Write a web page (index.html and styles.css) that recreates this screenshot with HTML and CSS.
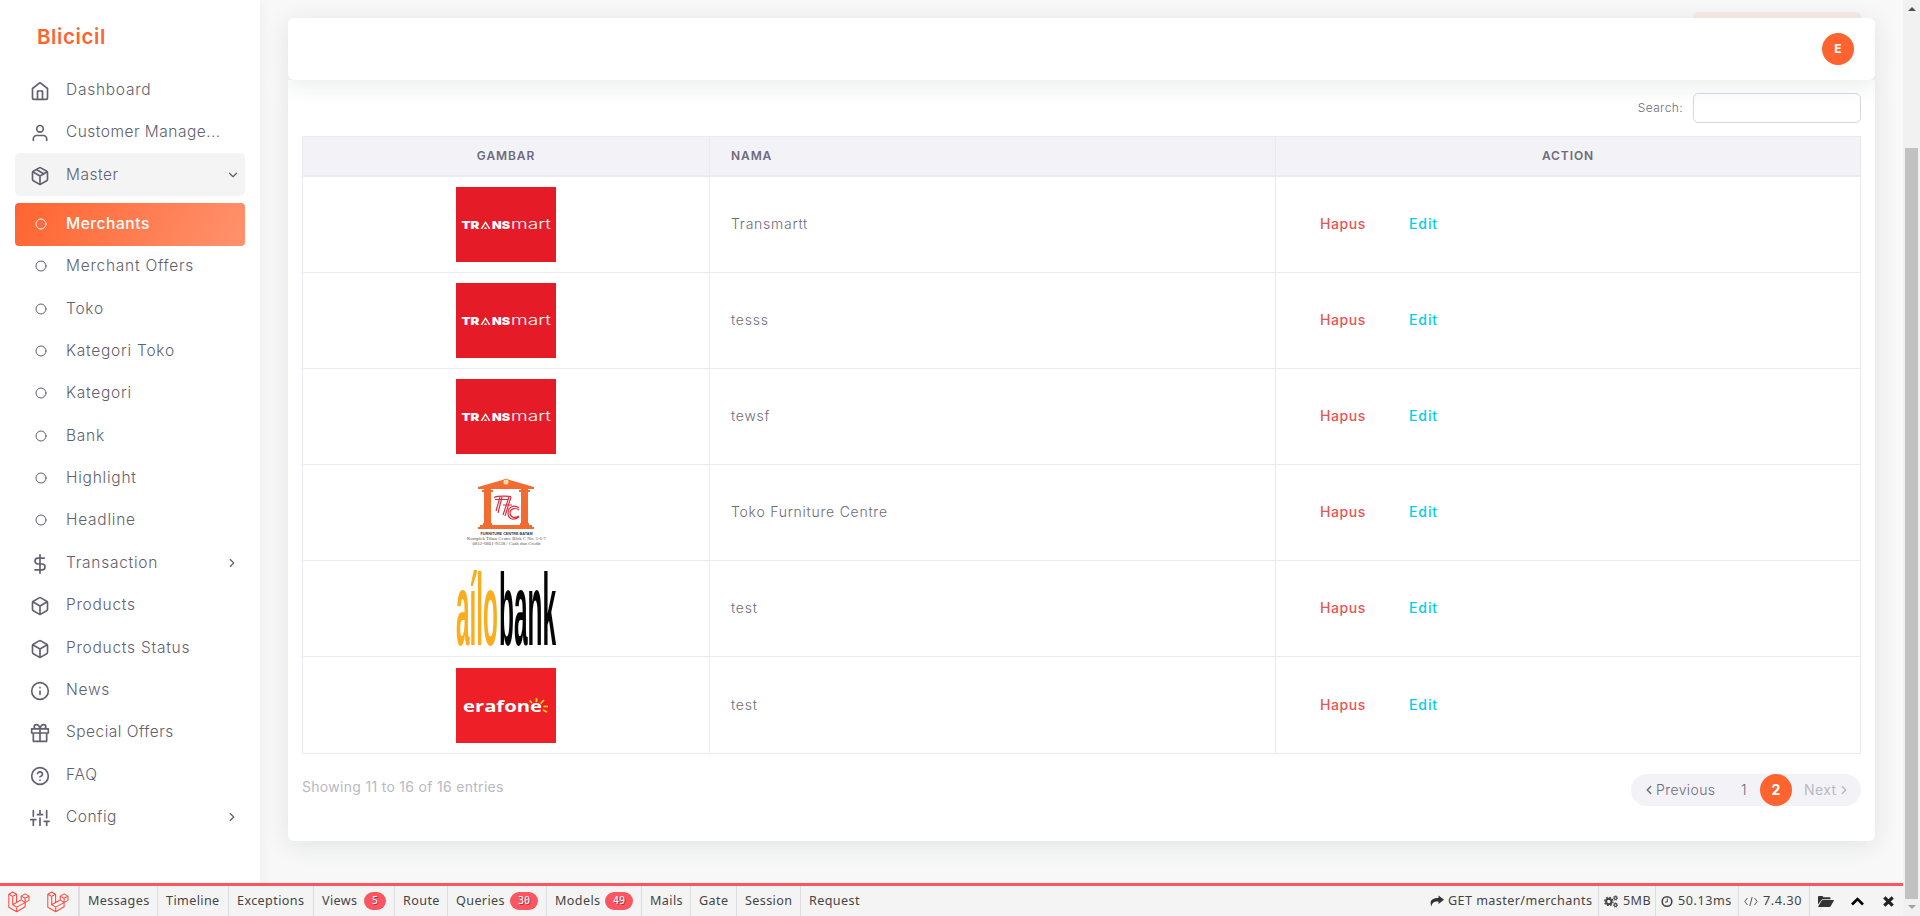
FILE: index.html
```html
<!DOCTYPE html>
<html lang="id">
<head>
<meta charset="utf-8">
<title>Blicicil</title>
<link rel="stylesheet" href="styles.css">
</head>
<body>
<svg class="defs">
  <symbol id="home" viewBox="0 0 24 24"><path d="M3 9l9-7 9 7v11a2 2 0 0 1-2 2H5a2 2 0 0 1-2-2z"/><path d="M9 22V12h6v10"/></symbol>
  <symbol id="user" viewBox="0 0 24 24"><path d="M20 21v-2a4 4 0 0 0-4-4H8a4 4 0 0 0-4 4v2"/><circle cx="12" cy="7" r="4"/></symbol>
  <symbol id="package" viewBox="0 0 24 24"><path d="M16.5 9.4l-9-5.19M21 16V8a2 2 0 0 0-1-1.73l-7-4a2 2 0 0 0-2 0l-7 4A2 2 0 0 0 3 8v8a2 2 0 0 0 1 1.73l7 4a2 2 0 0 0 2 0l7-4A2 2 0 0 0 21 16z"/><path d="M3.27 6.96L12 12.01l8.73-5.05M12 22.08V12"/></symbol>
  <symbol id="box" viewBox="0 0 24 24"><path d="M21 16V8a2 2 0 0 0-1-1.73l-7-4a2 2 0 0 0-2 0l-7 4A2 2 0 0 0 3 8v8a2 2 0 0 0 1 1.73l7 4a2 2 0 0 0 2 0l7-4A2 2 0 0 0 21 16z"/><path d="M3.27 6.96L12 12.01l8.73-5.05M12 22.08V12"/></symbol>
  <symbol id="circle" viewBox="0 0 24 24"><circle cx="12" cy="12" r="10"/></symbol>
  <symbol id="dollar" viewBox="0 0 24 24"><path d="M12 1v22M17 5H9.5a3.5 3.5 0 0 0 0 7h5a3.5 3.5 0 0 1 0 7H6"/></symbol>
  <symbol id="info" viewBox="0 0 24 24"><circle cx="12" cy="12" r="10"/><path d="M12 16v-4M12 8h.01"/></symbol>
  <symbol id="gift" viewBox="0 0 24 24"><path d="M20 12v10H4V12M2 7h20v5H2zM12 22V7M12 7H7.5a2.5 2.5 0 0 1 0-5C11 2 12 7 12 7zM12 7h4.500a2.500 2.500 0 0 0 0-5C13 2 12 7 12 7z"/></symbol>
  <symbol id="help" viewBox="0 0 24 24"><circle cx="12" cy="12" r="10"/><path d="M9.090 9a3 3 0 0 1 5.830 1c0 2-3 3-3 3M12 17h.01"/></symbol>
  <symbol id="sliders" viewBox="0 0 24 24"><path d="M4 21v-7M4 10V3M12 21v-9M12 8V3M20 21v-5M20 12V3M1 14h6M9 8h6M17 16h6"/></symbol>
  <symbol id="right" viewBox="0 0 24 24"><path d="M9 18l6-6-6-6"/></symbol>
  <symbol id="left" viewBox="0 0 24 24"><path d="M15 18l-6-6 6-6"/></symbol>
  <symbol id="down" viewBox="0 0 24 24"><path d="M6 9l6 6 6-6"/></symbol>
  <symbol id="laravel" viewBox="0 0 22 22"><path d="M.8 3.200L4.700 1l3.900 2.200v8.300l4.600-2.600V5.100L17.100 2.900 21 5.100v4.300l-3.900 2.200v4.200L8.700 20.700.8 16.200zM.8 3.200l3.900 2.200 3.900-2.200M4.700 5.400v8.400l3.900-2.300M4.700 13.800l4 2.300 8.400-4.500M8.700 16.100v4.600M13.200 5.100l3.900 2.200L21 5.100M17.100 7.300v4.300l-3.900-2.700"/></symbol>
</svg>
<div class="app">
  <aside class="sidebar">
    <div class="brand">Blicicil</div>
    <nav>
      <a class="item"><svg><use href="#home"/></svg><span>Dashboard</span></a>
      <a class="item"><svg><use href="#user"/></svg><span class="customer">Customer Manage...</span></a>
      <a class="item open"><svg><use href="#package"/></svg><span class="master">Master</span><svg class="chev"><use href="#down"/></svg></a>
      <a class="item sub active"><svg><use href="#circle"/></svg><span>Merchants</span></a>
      <a class="item sub"><svg><use href="#circle"/></svg><span>Merchant Offers</span></a>
      <a class="item sub"><svg><use href="#circle"/></svg><span>Toko</span></a>
      <a class="item sub"><svg><use href="#circle"/></svg><span>Kategori Toko</span></a>
      <a class="item sub"><svg><use href="#circle"/></svg><span>Kategori</span></a>
      <a class="item sub"><svg><use href="#circle"/></svg><span>Bank</span></a>
      <a class="item sub"><svg><use href="#circle"/></svg><span>Highlight</span></a>
      <a class="item sub"><svg><use href="#circle"/></svg><span>Headline</span></a>
      <a class="item"><svg><use href="#dollar"/></svg><span>Transaction</span><svg class="chev"><use href="#right"/></svg></a>
      <a class="item"><svg><use href="#box"/></svg><span>Products</span></a>
      <a class="item"><svg><use href="#box"/></svg><span>Products Status</span></a>
      <a class="item"><svg><use href="#info"/></svg><span>News</span></a>
      <a class="item"><svg><use href="#gift"/></svg><span class="customer">Special Offers</span></a>
      <a class="item"><svg><use href="#help"/></svg><span>FAQ</span></a>
      <a class="item"><svg><use href="#sliders"/></svg><span class="master">Config</span><svg class="chev"><use href="#right"/></svg></a>
    </nav>
  </aside>
  <main class="content">
    <div class="add-button"></div>
    <header class="navbar"><div class="avatar">E</div></header>
    <section class="card">
      <label class="search"><span>Search:</span><input type="text"></label>
      <table>
        <thead><tr><th class="c1">Gambar</th><th class="c2">Nama</th><th class="c3">Action</th></tr></thead>
        <tbody>
          <tr><td class="pic"><svg class="tm" viewBox="0 0 100 75"><text class="tm-bold" x="5.500" y="42" textLength="18" lengthAdjust="spacingAndGlyphs">TR</text><path d="M24.500 42l5-8 5 8h-1.700l-3.300-5.500-3.300 5.500zM28 42l1.500-2.500L31 42z"/><text class="tm-bold" x="36" y="42" textLength="18" lengthAdjust="spacingAndGlyphs">NS</text><text class="tm-thin" x="55" y="42" textLength="40" lengthAdjust="spacingAndGlyphs">mart</text></svg></td><td class="name">Transmartt</td><td><div class="actions"><a class="del">Hapus</a><a class="edit">Edit</a></div></td></tr>
          <tr><td class="pic"><svg class="tm" viewBox="0 0 100 75"><text class="tm-bold" x="5.500" y="42" textLength="18" lengthAdjust="spacingAndGlyphs">TR</text><path d="M24.500 42l5-8 5 8h-1.700l-3.300-5.500-3.300 5.500zM28 42l1.500-2.500L31 42z"/><text class="tm-bold" x="36" y="42" textLength="18" lengthAdjust="spacingAndGlyphs">NS</text><text class="tm-thin" x="55" y="42" textLength="40" lengthAdjust="spacingAndGlyphs">mart</text></svg></td><td class="name">tesss</td><td><div class="actions"><a class="del">Hapus</a><a class="edit">Edit</a></div></td></tr>
          <tr><td class="pic"><svg class="tm" viewBox="0 0 100 75"><text class="tm-bold" x="5.500" y="42" textLength="18" lengthAdjust="spacingAndGlyphs">TR</text><path d="M24.500 42l5-8 5 8h-1.700l-3.300-5.500-3.300 5.500zM28 42l1.500-2.500L31 42z"/><text class="tm-bold" x="36" y="42" textLength="18" lengthAdjust="spacingAndGlyphs">NS</text><text class="tm-thin" x="55" y="42" textLength="40" lengthAdjust="spacingAndGlyphs">mart</text></svg></td><td class="name">tewsf</td><td><div class="actions"><a class="del">Hapus</a><a class="edit">Edit</a></div></td></tr>
          <tr><td class="pic"><svg viewBox="0 0 100 75">
            <g fill="#f26b31"><path d="M22 12L50 4l28 8v2H22zM28 14h7v35h-7zM65 14h7v35h-7zM26 15h11v2H26zM63 15h11v2H63zM27 48h9v3h-9zM64 48h9v3h-9zM24 50h52v2H24zM22 52h56v2H22z"/><circle cx="50" cy="7" r="3" fill="#fbd9a5" stroke="#f26b31" stroke-width=".7"/></g>
            <g fill="none" stroke="#dc2f3d" stroke-width="1.200"><path d="M38 22.500q4-2 17-1M39 24.500h13M47 30h9M44 22l-4 14M46 22l-4 16M53 22l-6 18M55 22l-6 19"/><path d="M63 33c-5-4-11-1-11 5s5 8 11 4M63 35c-4-3-9-1-9 3s4 6 9 3"/></g>
            <text class="fc-name" x="24.500" y="60" textLength="52" lengthAdjust="spacingAndGlyphs">FURNITURE CENTRE BATAM</text>
            <text class="fc-addr" x="11" y="65" textLength="79" lengthAdjust="spacingAndGlyphs">Komplek Tiban Centre Blok C No. 5-6-7</text>
            <text class="fc-addr" x="16.500" y="69.500" textLength="68" lengthAdjust="spacingAndGlyphs">0812-6801-9138 / Cash dan Credit</text>
          </svg></td><td class="name">Toko Furniture Centre</td><td><div class="actions"><a class="del">Hapus</a><a class="edit">Edit</a></div></td></tr>
          <tr><td class="pic"><svg class="allo-logo" viewBox="0 0 100 75"><g transform="translate(0 73.800) scale(1 3.750)"><text class="allo" x="0" y="0" textLength="42" lengthAdjust="spacingAndGlyphs" fill="#fbad1d">aílo</text><text class="allo" x="43" y="0" textLength="57" lengthAdjust="spacingAndGlyphs" fill="#050505">bank</text></g></svg></td><td class="name">test</td><td><div class="actions"><a class="del">Hapus</a><a class="edit">Edit</a></div></td></tr>
          <tr><td class="pic"><svg viewBox="0 0 100 75"><rect width="100" height="75" fill="#ee1f26"/><text class="era" x="7" y="44" textLength="79" lengthAdjust="spacingAndGlyphs">erafone</text><path d="M76 35l-2.500-2.500M80.500 34v-4M84.500 35.500l3.500-3.500M87.500 38.500h4.500M87 42l4 2" stroke="#fbdb15" stroke-width="1.700" fill="none"/></svg></td><td class="name">test</td><td><div class="actions"><a class="del">Hapus</a><a class="edit">Edit</a></div></td></tr>
        </tbody>
      </table>
      <div class="table-foot">
        <span class="showing">Showing 11 to 16 of 16 entries</span>
        <div class="pager"><svg><use href="#left"/></svg><span class="prev">Previous</span><span class="one">1</span><b>2</b><span class="next">Next</span><svg class="off"><use href="#right"/></svg></div>
      </div>
    </section>
  </main>
  <div class="scrollbar"><i class="up"></i><div class="thumb"></div><i class="dn"></i></div>
</div>
<footer class="debugbar">
  <div class="logos"><svg><use href="#laravel"/></svg><svg><use href="#laravel"/></svg></div>
  <a class="t1">Messages</a><a class="t2">Timeline</a><a class="t3">Exceptions</a><a class="t4">Views<em>5</em></a><a class="t5">Route</a><a class="t6">Queries<em>30</em></a><a class="t7">Models<em>49</em></a><a class="t8">Mails</a><a class="t9">Gate</a><a class="t10">Session</a><a class="t11">Request</a>
  <div class="right">
    <span class="r1"><svg viewBox="0 0 14 12"><path d="M8.500 0L14 4.300 8.500 8.600V6C5 5.800 2 6.500 1.500 11 -1 5.500 2 2.600 8.500 2.600z"/></svg><span>GET master/merchants</span></span>
    <span class="r2"><svg viewBox="0 0 14 13"><g fill="none" stroke="#444"><circle cx="4.800" cy="6.500" r="2.700" stroke-width="2"/><circle cx="4.800" cy="6.500" r="4.200" stroke-width="1.200" stroke-dasharray="1.700 1.600"/><circle cx="11.500" cy="3" r="1.400" stroke-width="1.100"/><circle cx="11.500" cy="3" r="2.200" stroke-width=".8" stroke-dasharray="1 .73"/><circle cx="11.500" cy="10" r="1.400" stroke-width="1.100"/><circle cx="11.500" cy="10" r="2.200" stroke-width=".8" stroke-dasharray="1 .73"/></g></svg><span>5MB</span></span>
    <span class="r3"><svg viewBox="0 0 12 12"><g fill="none" stroke="#444"><circle cx="6" cy="6" r="4.800" stroke-width="1.600"/><path d="M6.300 3v3.500H4"/></g></svg><span>50.13ms</span></span>
    <span class="r4"><svg viewBox="0 0 14 10"><path d="M3.500 1.500L.8 5l2.700 3.500M10.500 1.500L13.200 5l-2.700 3.500M8.200.5L5.800 9.500" fill="none" stroke="#555"/></svg><span>7.4.30</span></span>
    <span class="r5"><svg viewBox="0 0 16 12"><path d="M0 9V1.500Q0 .5 1 .5h3.500l1 1.300h6q1 0 1 1v1H5Q3.700 3.800 3 5zM.2 11L3.700 5q.5-.6 1.300-.6h10.500q.7 0 .2.800l-3 5.500q-.5.700-1.200.7H.6q-.5 0-.4-.4z"/></svg></span>
    <span class="r6"><svg viewBox="0 0 13 9"><path d="M1 7.500L6.500 2 12 7.500" fill="none" stroke="#000" stroke-width="2.600"/></svg></span>
    <span class="r7"><svg viewBox="0 0 10 10"><path d="M1.200 1.200l7.600 7.600M8.800 1.200L1.200 8.800" fill="none" stroke="#222" stroke-width="3"/></svg></span>
  </div>
</footer>
</body>
</html>
```
FILE: styles.css
```css
* { box-sizing: border-box; }
body { margin: 0; height: 916px; overflow: hidden; background: #f8f8f8; color: #6e6b7b; font: 14px/20px Inter, "Open Sans", sans-serif; }
.defs { position: absolute; width: 0; height: 0; }
.app { display: flex; height: 916px; }
.sidebar { width: 260px; flex: none; background: #fff; box-shadow: 0 0 15px rgba(34, 41, 47, .05); padding: 20px 15px 0; }
.brand { height: 48.800px; padding-left: 22px; line-height: 33px; font-size: 20.500px; font-weight: 600; color: #ff6430; letter-spacing: .6px; }
.item { display: flex; align-items: center; height: 42.330px; padding-left: 15px; color: #625f6e; font-size: 15.500px; font-weight: 300; border-radius: 4px; letter-spacing: .75px; white-space: nowrap; }
.item svg { width: 20px; height: 20px; flex: none; margin: 2px 16px 0 0; fill: none; stroke: #625f6e; stroke-width: 2; stroke-linecap: round; stroke-linejoin: round; }
.item span { flex: 1; }
.item .customer { letter-spacing: .48px; }
.item .master { letter-spacing: .5px; }
.item .chev { width: 14px; height: 14px; margin: 0 6px 0 0; }
.open { background: #f4f4f4; margin-bottom: 7px; border-radius: 5px; }
.open .chev { margin-right: 5px; }
.sub svg { width: 12px; height: 12px; margin: 0 19.500px 0 4.500px; }
.sub { padding-bottom: .5px; }
.sub.active { height: 42.800px; color: #fff; font-weight: 500; background: linear-gradient(118deg, #ff6430, rgba(255, 100, 48, .7)); letter-spacing: .55px; padding-bottom: 1px; }
.active svg { stroke: #fff; }

.content { flex: 1; padding: 12px 28px 0; }
.add-button { height: 6px; width: 168px; margin: 0 14px 0 auto; background: #f6ece8; border-radius: 5px 5px 0 0; }
.navbar { position: relative; height: 62px; background: #fff; border-radius: 6px; box-shadow: 0 4px 24px rgba(34, 41, 47, .1); display: flex; align-items: center; justify-content: flex-end; padding-right: 21px; }
.avatar { width: 32px; height: 32px; border-radius: 50%; background: #ff6430; color: #fff; font-size: 12px; font-weight: 700; line-height: 32px; text-align: center; }
.card { height: 761px; background: #fff; border-radius: 0 0 6px 6px; box-shadow: 0 4px 24px rgba(34, 41, 47, .1); padding: 13px 14px 0; }
.search { display: flex; justify-content: flex-end; align-items: center; gap: 10px; height: 30px; font-size: 12px; font-weight: 300; letter-spacing: .4px; }
.search input { width: 168px; height: 30px; border: 1px solid #d8d6de; border-radius: 5px; background: transparent; }
table { width: 1559px; margin-top: 13px; border-collapse: collapse; table-layout: fixed; }
th, td { border: 1px solid #ebe9f1; padding: 0 21px; }
th { height: 39.500px; background: #f3f2f7; border-bottom-width: 2px; font-size: 12px; font-weight: 600; text-transform: uppercase; letter-spacing: .9px; line-height: 18px; }
.c1 { width: 407px; }
.c2 { width: 566px; text-align: left; }
td { height: 96.200px; }
.pic { text-align: center; padding: 0; }
.pic svg { display: block; width: 100px; height: 75px; margin: 0 auto; }
.name { font-weight: 350; letter-spacing: .75px; padding-bottom: 1px; }
.actions { display: flex; padding-left: 23px; padding-bottom: 1px; font-weight: 500; letter-spacing: .55px; }
.del { width: 89px; color: #ea5455; }
.edit { color: #00cfe8; letter-spacing: .9px; }
.tm { background: #e51c27; fill: #fff; }
.tm-bold { font: 900 11px Inter, sans-serif; }
.tm-thin { font: 300 14px Inter, sans-serif; }
.fc-name { font: 700 4px "Liberation Sans", sans-serif; fill: #333; }
.fc-addr { font: 4px "Liberation Serif", serif; fill: #555; }
.pic .allo-logo { overflow: visible; }
.allo { font: 700 27px "Liberation Sans", sans-serif; }
.era { font: 700 16px "Open Sans", sans-serif; fill: #fff; }
.table-foot { display: flex; justify-content: space-between; padding-top: 20px; }
.showing { padding-top: 3px; color: #b9b9c3; letter-spacing: .3px; }
.pager { display: flex; align-items: center; width: 230px; height: 32px; border-radius: 16px; background: #f3f2f7; padding-left: 11px; }
.pager svg { width: 14px; height: 14px; fill: none; stroke: #6e6b7b; stroke-width: 2.500; stroke-linecap: round; stroke-linejoin: round; }
.pager .off { stroke: #b9b9c3; }
.prev { width: 85px; letter-spacing: .4px; font-weight: 350; }
.one { width: 19px; font-weight: 350; }
.pager b { width: 32px; height: 32px; line-height: 32px; text-align: center; border-radius: 50%; background: #ff6430; color: #fff; margin-right: 12px; }
.next { color: #b9b9c3; width: 33px; letter-spacing: .4px; }

.scrollbar { width: 17px; background: #f1f1f1; padding: 7px 0 5px; display: flex; flex-direction: column; align-items: center; }
.scrollbar i { border: 4px solid transparent; }
.scrollbar .up { border-top: 0; border-bottom-color: #505050; }
.scrollbar .dn { border-bottom: 0; border-top-color: #a3a3a3; }
.thumb { width: 13px; height: 751px; margin: 137px 0 6px; background: #c1c1c1; }

.debugbar { position: absolute; left: 0; bottom: 0; width: 1903px; height: 33px; display: flex; background: #f4f4f4; border-top: 3px solid #fa5661; color: #444; font: 12.600px/30px "Noto Sans", sans-serif; letter-spacing: .38px; white-space: nowrap; }
.logos { width: 80px; border-right: 2px solid #ddd; display: flex; gap: 17px; padding: 5px 0 0 8px; }
.logos svg { width: 22px; height: 22px; fill: none; stroke: #fa4b40; stroke-width: 1.050; stroke-linejoin: round; }
.debugbar > a { border-right: 1px solid #ddd; padding-left: 8px; display: flex; align-items: center; flex: none; }
.debugbar em { font: 10px/18px "DejaVu Sans Mono", monospace; letter-spacing: 0; color: #fff; background: #fa5661; border-radius: 10px; padding: 0 8px; margin-left: auto; margin-right: 8px; text-shadow: 1px 1px 0 rgba(0, 0, 0, .35); }
.t1 { width: 78px; } .t2 { width: 71px; } .t3 { width: 85px; } .t4 { width: 81px; } .t5 { width: 53px; } .t6 { width: 99px; } .t7 { width: 95px; } .t8 { width: 49px; } .t9 { width: 46px; } .t10 { width: 64px; } .debugbar > .t11 { border: 0; }
.right { margin-left: auto; display: flex; }
.right > span { display: flex; align-items: center; gap: 5px; border-right: 1px solid #ddd; padding-left: 5px; }
.right svg { width: 14px; height: 13px; fill: #333; flex: none; }
.right .r1 { width: 174px; gap: 4px; letter-spacing: .42px; } .right .r2 { width: 57px; } .right .r3 { width: 83px; letter-spacing: .55px; } .right .r4 { width: 71px; letter-spacing: .6px; }
.right .r5, .right .r6, .right .r7 { border: 0; padding: 0; }
.right .r5 { width: 41px; padding-left: 8px; } .right .r6 { width: 32px; } .right .r7 { width: 20px; }
.r5 svg { width: 16px; } .r3 svg { width: 12px; } .r6 svg { width: 13px; } .r7 svg { width: 11px; }
```
